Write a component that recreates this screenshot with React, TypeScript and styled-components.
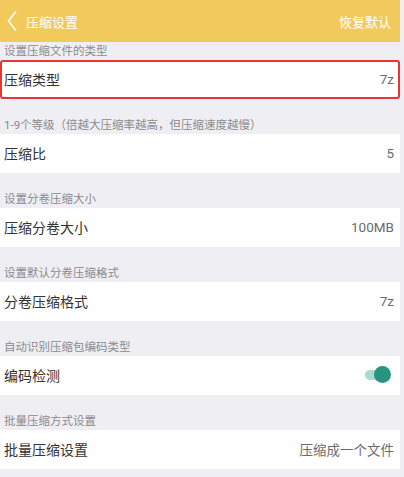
import styled, { createGlobalStyle } from 'styled-components';

const GlobalStyle = createGlobalStyle`
  html, body {
    margin: 0;
    padding: 0;
    background: #efeff3;
  }
  body {
    font-family: Roboto, "Noto Sans CJK SC", sans-serif;
  }
`;

const Page = styled.div`
  width: 400px;
  min-height: 477px;
  background: #efeff3;
`;

const Header = styled.header`
  display: flex;
  align-items: center;
  justify-content: space-between;
  height: 42px;
  padding: 0 9px 0 7px;
  background: #f2ca5b;
  color: #fff;
  font-size: 13px;
`;

const HeaderLeft = styled.div`
  display: flex;
  align-items: center;
  gap: 9px;
`;

const Band = styled.div<{ $first?: boolean }>`
  display: flex;
  align-items: flex-end;
  height: ${(p) => (p.$first ? '18px' : '35.5px')};
  padding-left: 4px;
`;

const BandLabel = styled.span`
  line-height: 17px;
  font-size: 11.5px;
  color: #8a8a8e;
`;

const Row = styled.div<{ $highlight?: boolean }>`
  box-sizing: border-box;
  display: flex;
  align-items: center;
  justify-content: space-between;
  height: 38.5px;
  padding: 0 6px 0 4px;
  background: #fff;
  border: ${(p) => (p.$highlight ? '2px solid #e8352f' : 'none')};
  border-radius: ${(p) => (p.$highlight ? '3px' : '0')};
  padding-left: ${(p) => (p.$highlight ? '2px' : '4px')};
  padding-right: ${(p) => (p.$highlight ? '4px' : '6px')};
`;

const RowTitle = styled.span`
  font-size: 14px;
  color: #333;
`;

const RowValue = styled.span`
  font-size: 13.5px;
  color: #6b6b6b;
`;

const Toggle = styled.div`
  position: relative;
  width: 26px;
  height: 18px;
  margin-right: 3px;
  &::before {
    content: '';
    position: absolute;
    left: 0;
    top: 4px;
    width: 22px;
    height: 10px;
    border-radius: 5px;
    background: #a9d9cf;
  }
  &::after {
    content: '';
    position: absolute;
    right: 0;
    top: 0;
    width: 17px;
    height: 17px;
    border-radius: 50%;
    background: #27947f;
  }
`;

const BackIcon = () => (
  <svg width="10" height="20" viewBox="0 0 10 20" fill="none">
    <path d="M8.5 1 L1.5 10 L8.5 19" stroke="#fff" strokeWidth="1.6" strokeLinecap="round" strokeLinejoin="round" />
  </svg>
);

type Item = { label: string; title: string; value?: string; toggle?: boolean };

const items: Item[] = [
  { label: '设置压缩文件的类型', title: '压缩类型', value: '7z' },
  { label: '1-9个等级（倍越大压缩率越高，但压缩速度越慢）', title: '压缩比', value: '5' },
  { label: '设置分卷压缩大小', title: '压缩分卷大小', value: '100MB' },
  { label: '设置默认分卷压缩格式', title: '分卷压缩格式', value: '7z' },
  { label: '自动识别压缩包编码类型', title: '编码检测', toggle: true },
  { label: '批量压缩方式设置', title: '批量压缩设置', value: '压缩成一个文件' },
];

const App = () => {
  return (
    <>
      <GlobalStyle />
      <Page>
        <Header>
          <HeaderLeft>
            <BackIcon />
            <span>压缩设置</span>
          </HeaderLeft>
          <span>恢复默认</span>
        </Header>
        {items.map((item, i) => (
          <div key={item.title}>
            <Band $first={i === 0}>
              <BandLabel>{item.label}</BandLabel>
            </Band>
            <Row $highlight={i === 0}>
              <RowTitle>{item.title}</RowTitle>
              {item.toggle ? <Toggle /> : <RowValue>{item.value}</RowValue>}
            </Row>
          </div>
        ))}
      </Page>
    </>
  );
};

export default App;
